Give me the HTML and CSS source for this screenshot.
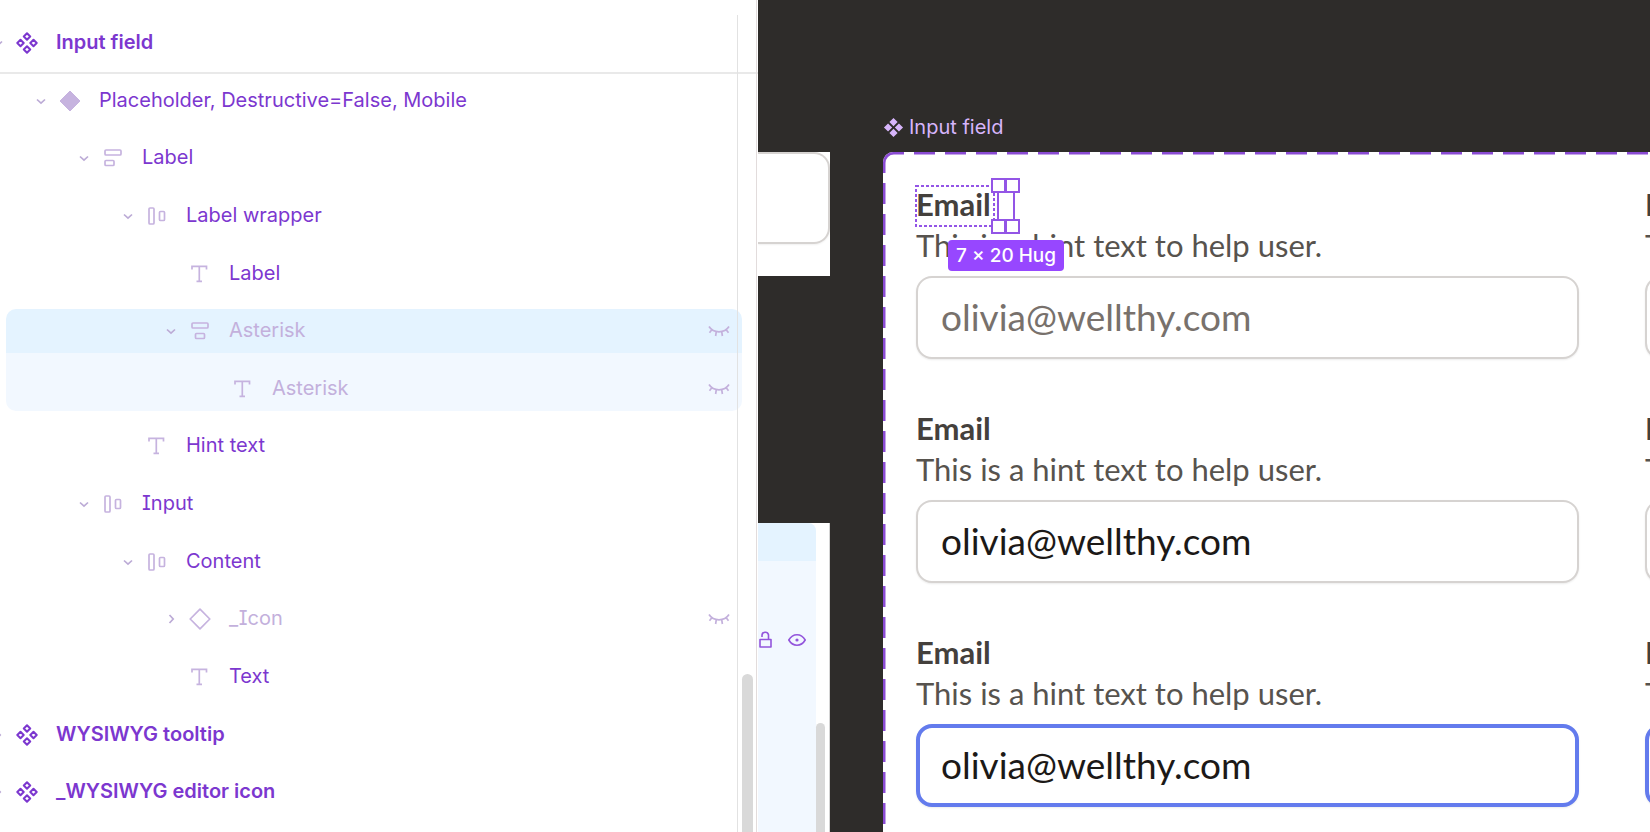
FILE: index.html
```html
<!DOCTYPE html>
<html lang="en">
<head>
    <meta charset="UTF-8">
    <meta name="viewport" content="width=device-width, initial-scale=1.0">
    <title>Input field - Layers</title>
    <link rel="stylesheet" href="styles.css">
</head>
<body>
    <svg class="sprite" aria-hidden="true">
        <symbol id="i-set" viewBox="0 0 22 22">
            <path d="M11 1.300l3.200 3.200L11 7.700 7.800 4.500zM11 14.300l3.200 3.200-3.200 3.200-3.200-3.200zM4.500 7.800L7.700 11l-3.200 3.200L1.300 11zM17.500 7.800l3.200 3.200-3.200 3.200-3.200-3.200z" fill="none" stroke="currentColor" stroke-width="2" stroke-linejoin="round"/>
        </symbol>
        <symbol id="i-set-fill" viewBox="0 0 22 22">
            <path d="M11 1l4.300 4.300L11 9.600 6.700 5.300zM11 12.400l4.300 4.300L11 21l-4.300-4.300zM5.300 6.700L9.600 11l-4.300 4.300L1 11zM16.700 6.700L21 11l-4.300 4.300-4.300-4.300z" fill="currentColor"/>
        </symbol>
        <symbol id="i-variant" viewBox="0 0 22 22">
            <path d="M11 1l10 10-10 10L1 11z" fill="currentColor" stroke="currentColor" stroke-linejoin="round"/>
        </symbol>
        <symbol id="i-instance" viewBox="0 0 22 22">
            <path d="M11 1.200l9.800 9.800-9.800 9.800L1.200 11z" fill="none" stroke="currentColor" stroke-width="1.700" stroke-linejoin="round"/>
        </symbol>
        <symbol id="i-stack-left" viewBox="0 0 22 22">
            <g fill="none" stroke="currentColor" stroke-width="1.700">
                <rect x="3" y="3" width="16" height="5" rx="1"/>
                <rect x="3" y="13.500" width="9" height="5" rx="1"/>
            </g>
        </symbol>
        <symbol id="i-stack-center" viewBox="0 0 22 22">
            <g fill="none" stroke="currentColor" stroke-width="1.700">
                <rect x="3" y="3" width="16" height="5" rx="1"/>
                <rect x="6.500" y="13.500" width="9" height="5" rx="1"/>
            </g>
        </symbol>
        <symbol id="i-row" viewBox="0 0 22 22">
            <g fill="none" stroke="currentColor" stroke-width="1.700">
                <rect x="3" y="3" width="5" height="16" rx="1"/>
                <rect x="13.500" y="6.500" width="5" height="9" rx="1"/>
            </g>
        </symbol>
        <symbol id="i-text" viewBox="0 0 22 22">
            <path d="M3 6.500V3.300h14.500v3.200M10.300 3.300v15M7.500 18.300h5.500" fill="none" stroke="currentColor" stroke-width="1.700"/>
        </symbol>
        <symbol id="i-down" viewBox="0 0 22 22">
            <path d="M7 9.500l4 3.700 4-3.700" fill="none" stroke="currentColor" stroke-width="1.700"/>
        </symbol>
        <symbol id="i-right" viewBox="0 0 22 22">
            <path d="M9.500 7l3.700 4-3.700 4" fill="none" stroke="currentColor" stroke-width="1.700"/>
        </symbol>
        <symbol id="i-hidden" viewBox="0 0 22 22">
            <path d="M1 6.500c2.600 4 6 5.300 10 5.300s7.400-1.300 10-5.300M3.800 9.700l-2.300 3M18.200 9.700l2.300 3M8.300 11.700L7.600 16M13.700 11.700l.7 4.300" fill="none" stroke="currentColor" stroke-width="1.700"/>
        </symbol>
    </svg>

    <div class="app">
        <aside class="layers">
            <header class="row root">
                <button class="toggle" aria-label="Collapse"><svg><use href="#i-down"/></svg></button>
                <svg class="icon"><use href="#i-set"/></svg>
                <span class="name">Input field</span>
            </header>
            <ul class="tree">
                <li class="row level-1">
                    <button class="toggle" aria-label="Collapse"><svg><use href="#i-down"/></svg></button>
                    <svg class="icon"><use href="#i-variant"/></svg>
                    <span class="name">Placeholder, Destructive=False, Mobile</span>
                </li>
                <li class="row level-2">
                    <button class="toggle" aria-label="Collapse"><svg><use href="#i-down"/></svg></button>
                    <svg class="icon"><use href="#i-stack-left"/></svg>
                    <span class="name">Label</span>
                </li>
                <li class="row level-3">
                    <button class="toggle" aria-label="Collapse"><svg><use href="#i-down"/></svg></button>
                    <svg class="icon"><use href="#i-row"/></svg>
                    <span class="name">Label wrapper</span>
                </li>
                <li class="row level-4">
                    <span class="toggle"></span>
                    <svg class="icon"><use href="#i-text"/></svg>
                    <span class="name">Label</span>
                </li>
                <li class="row level-4 off selected">
                    <button class="toggle" aria-label="Collapse"><svg><use href="#i-down"/></svg></button>
                    <svg class="icon"><use href="#i-stack-center"/></svg>
                    <span class="name">Asterisk</span>
                    <button class="eye" aria-label="Show layer"><svg><use href="#i-hidden"/></svg></button>
                </li>
                <li class="row level-5 off selected-child">
                    <span class="toggle"></span>
                    <svg class="icon"><use href="#i-text"/></svg>
                    <span class="name">Asterisk</span>
                    <button class="eye" aria-label="Show layer"><svg><use href="#i-hidden"/></svg></button>
                </li>
                <li class="row level-3">
                    <span class="toggle"></span>
                    <svg class="icon"><use href="#i-text"/></svg>
                    <span class="name">Hint text</span>
                </li>
                <li class="row level-2">
                    <button class="toggle" aria-label="Collapse"><svg><use href="#i-down"/></svg></button>
                    <svg class="icon"><use href="#i-row"/></svg>
                    <span class="name">Input</span>
                </li>
                <li class="row level-3">
                    <button class="toggle" aria-label="Collapse"><svg><use href="#i-down"/></svg></button>
                    <svg class="icon"><use href="#i-row"/></svg>
                    <span class="name">Content</span>
                </li>
                <li class="row level-4 off">
                    <button class="toggle" aria-label="Expand"><svg><use href="#i-right"/></svg></button>
                    <svg class="icon"><use href="#i-instance"/></svg>
                    <span class="name">_Icon</span>
                    <button class="eye" aria-label="Show layer"><svg><use href="#i-hidden"/></svg></button>
                </li>
                <li class="row level-4">
                    <span class="toggle"></span>
                    <svg class="icon"><use href="#i-text"/></svg>
                    <span class="name">Text</span>
                </li>
                <li class="row root">
                    <button class="toggle" aria-label="Expand"><svg><use href="#i-right"/></svg></button>
                    <svg class="icon"><use href="#i-set"/></svg>
                    <span class="name">WYSIWYG tooltip</span>
                </li>
                <li class="row root">
                    <button class="toggle" aria-label="Expand"><svg><use href="#i-right"/></svg></button>
                    <svg class="icon"><use href="#i-set"/></svg>
                    <span class="name">_WYSIWYG editor icon</span>
                </li>
            </ul>
            <div class="scroll-track"></div>
            <div class="scroll-thumb"></div>
        </aside>

        <main class="canvas">
            <div class="card card-field"><div class="card-box"></div></div>

            <div class="card card-list">
                <div class="list-body">
                    <div class="list-selected"></div>
                    <div class="list-actions">
                        <button aria-label="Lock"><svg viewBox="0 0 18 18"><path d="M2 8.500h11v7.500H2zM4 6V4.500a3.300 3.300 0 0 1 6.500-.8V8.500" fill="none" stroke="currentColor" stroke-width="1.600" stroke-linejoin="round"/></svg></button>
                        <button aria-label="Hide"><svg viewBox="0 0 18 18"><path d="M.8 9C3 5.200 5.700 3.800 9 3.800S15 5.200 17.200 9C15 12.800 12.300 14.200 9 14.200S3 12.800.8 9z" fill="none" stroke="currentColor" stroke-width="1.600"/><circle cx="9" cy="9" r="1.600" fill="currentColor"/></svg></button>
                    </div>
                </div>
                <div class="list-thumb"></div>
            </div>

            <h2 class="frame-title"><svg><use href="#i-set-fill"/></svg>Input field</h2>
            <section class="frame">
                <svg class="frame-outline" aria-hidden="true">
                    <path d="M31 1H4000M1 31V4000" stroke-dasharray="21 10"/>
                    <path d="M21 1H11A10 10 0 0 0 1 11V21"/>
                </svg>

                <div class="field">
                    <label for="email-1">Email
                        <svg class="selection" viewBox="0 0 110 52" aria-hidden="true">
                            <rect x="3" y="6" width="78" height="40" class="dots"/>
                            <path d="M85 11v32M101 11v32"/>
                            <path d="M79 -1h13v13h-13zM93 -1h13v13h-13zM79 40h13v13h-13zM93 40h13v13h-13z" class="handle"/>
                        </svg>
                        <span class="size-badge">7 × 20 Hug</span>
                    </label>
                    <p class="hint">This is a hint text to help user.</p>
                    <input type="email" id="email-1" placeholder="olivia@wellthy.com">
                </div>
                <div class="field">
                    <label for="email-2">Email</label>
                    <p class="hint">This is a hint text to help user.</p>
                    <input type="email" id="email-2">
                </div>
                <div class="field">
                    <label for="email-3">Email</label>
                    <p class="hint">This is a hint text to help user.</p>
                    <input type="email" id="email-3" value="olivia@wellthy.com">
                </div>
                <div class="field">
                    <label for="email-4">Email</label>
                    <p class="hint">This is a hint text to help user.</p>
                    <input type="email" id="email-4">
                </div>
                <div class="field focused">
                    <label for="email-5">Email</label>
                    <p class="hint">This is a hint text to help user.</p>
                    <input type="email" id="email-5" value="olivia@wellthy.com">
                </div>
                <div class="field focused">
                    <label for="email-6">Email</label>
                    <p class="hint">This is a hint text to help user.</p>
                    <input type="email" id="email-6">
                </div>
            </section>
        </main>
    </div>
</body>
</html>
```
FILE: styles.css
```css
* {
    margin: 0;
    padding: 0;
    box-sizing: border-box;
}

body {
    font-family: Inter, Arial, sans-serif;
    font-size: 20px;
    background-color: #2e2c2a;
}

button {
    border: none;
    background: none;
    color: inherit;
    cursor: pointer;
}

svg {
    display: block;
}

.sprite {
    position: absolute;
    width: 0;
    height: 0;
}

.app {
    display: flex;
    height: 100vh;
    overflow: hidden;
}

/* layers panel */
.layers {
    position: relative;
    flex: 0 0 758px;
    display: flex;
    flex-direction: column;
    padding-bottom: 11px;
    background-color: white;
    overflow: hidden;
}

.layers::after {
    content: "";
    position: absolute;
    top: 0;
    bottom: 0;
    right: 1px;
    width: 1px;
    background-color: #e2dcdc;
}

header.row {
    height: 72px;
    padding-top: 14px;
    box-shadow: 0 2px 0 #e9e9e9;
}

.tree {
    flex: 1;
    display: grid;
    grid-auto-rows: 1fr;
    align-items: center;
    list-style: none;
}

.row {
    position: relative;
    display: flex;
    align-items: center;
    color: #7c37cf;
}

.tree .row {
    height: 44px;
}

.level-1 { padding-left: 43px; }
.level-2 { padding-left: 86px; }
.level-3 { padding-left: 130px; }
.level-4 { padding-left: 173px; }
.level-5 { padding-left: 216px; }

.toggle {
    flex: none;
    width: 22px;
    height: 22px;
    margin-left: -13px;
    color: #bcabd6;
}

.row .toggle {
    color: #bcabd6;
}

.toggle svg,
.icon,
.eye svg {
    width: 22px;
    height: 22px;
}

.icon {
    flex: none;
    margin: 0 18px 0 7px;
    color: #c6b3df;
}

.root .icon {
    color: #7c37cf;
}

.name {
    position: relative;
    padding-bottom: 2px;
    line-height: 24px;
    font-feature-settings: "cv08";
}

.root .name {
    font-weight: 600;
    font-feature-settings: normal;
}

.off .name {
    color: #c3b0dc;
}

.eye {
    position: relative;
    margin-left: auto;
    margin-right: 28px;
    color: #c3b0dc;
}

.selected::before,
.selected-child::before {
    content: "";
    position: absolute;
    top: 0;
    bottom: 0;
    left: 6px;
    right: 16px;
    background-color: #e4f3ff;
    border-radius: 10px 10px 0 0;
}

.selected-child::before {
    top: -14px;
    background-color: #f2f8ff;
    border-radius: 0 0 10px 10px;
}

.selected .toggle,
.selected .icon,
.selected-child .icon {
    position: relative;
}

.scroll-track {
    position: absolute;
    top: 15px;
    bottom: 0;
    right: 20px;
    width: 1px;
    background-color: #e2e2e2;
}

.scroll-thumb {
    position: absolute;
    top: 674px;
    bottom: -10px;
    right: 5px;
    width: 11px;
    border-radius: 6px;
    background-color: #d9d9d9;
}

/* canvas */
.canvas {
    position: relative;
    flex: 1;
    overflow: hidden;
}

.card {
    position: absolute;
    left: 0;
    width: 72px;
    background-color: white;
}

.card-field {
    top: 152px;
    height: 124px;
}

.card-box {
    height: 92px;
    border: 2px solid #d6d3d1;
    border-left: none;
    border-radius: 0 16px 16px 0;
    box-shadow: 0 1px 2px rgba(0, 0, 0, 0.06);
}

.card-list {
    top: 523px;
    bottom: 0;
    border-right: 1px solid #d4d4d4;
}

.list-body {
    width: 58px;
    height: 100%;
    background-color: #f2f8ff;
    border-top-right-radius: 8px;
}

.list-selected {
    height: 38px;
    background-color: #e4f3ff;
    border-top-right-radius: 8px;
}

.list-actions {
    display: flex;
    gap: 12px;
    padding-top: 70px;
    color: #9355dc;
}

.list-actions svg {
    width: 18px;
    height: 18px;
}

.list-thumb {
    position: absolute;
    top: 200px;
    bottom: -10px;
    right: 4px;
    width: 9px;
    border-radius: 5px;
    background-color: #d9d9d9;
}

.frame-title {
    position: absolute;
    top: 115px;
    left: 125px;
    display: flex;
    align-items: center;
    gap: 5px;
    font-size: 20px;
    font-weight: 400;
    line-height: 24px;
    color: #d7b5fb;
}

.frame-title svg {
    width: 21px;
    height: 21px;
}

.frame {
    position: absolute;
    top: 152px;
    left: 125px;
    right: 0;
    bottom: 0;
    display: grid;
    grid-template-columns: 663px 663px;
    gap: 49px 66px;
    align-content: start;
    padding: 32px 33px;
    background-color: white;
    border-top-left-radius: 10px;
    overflow: hidden;
}

.frame-outline {
    position: absolute;
    inset: 0;
    width: 100%;
    height: 100%;
    fill: none;
    stroke: #8a4bd3;
    stroke-width: 3;
}

.field {
    font-family: Lato, "Open Sans", sans-serif;
    font-size: 31px;
    line-height: 41px;
    color: #57534e;
}

.field label {
    position: relative;
    display: block;
    width: 78px;
    font-weight: 700;
    color: #44403c;
}

.hint {
    white-space: nowrap;
}

.field input {
    display: block;
    width: 100%;
    height: 83px;
    margin-top: 10px;
    padding: 0 23px 3px;
    border: 2px solid #d6d3d1;
    border-radius: 16px;
    outline: none;
    background-color: white;
    box-shadow: 0 1px 2px rgba(0, 0, 0, 0.08);
    font-family: inherit;
    font-size: 37px;
    color: #1c1917;
}

.field input::placeholder {
    color: #78716c;
    opacity: 1;
}

.focused input {
    padding: 0 21px 3px;
    border: 4px solid #637bed;
}

.selection {
    position: absolute;
    top: -4px;
    left: -3px;
    width: 110px;
    height: 52px;
    overflow: visible;
    fill: none;
    stroke: #9355e6;
    stroke-width: 2;
}

.selection .dots {
    stroke-dasharray: 3 2;
}

.selection .handle {
    fill: white;
}

.size-badge {
    position: absolute;
    z-index: 1;
    top: 56px;
    left: 32px;
    padding: 0 8px;
    border-radius: 4px;
    background-color: #9747ff;
    font-family: Inter, Arial, sans-serif;
    font-size: 19px;
    font-weight: 500;
    line-height: 31px;
    white-space: nowrap;
    color: white;
}
```
